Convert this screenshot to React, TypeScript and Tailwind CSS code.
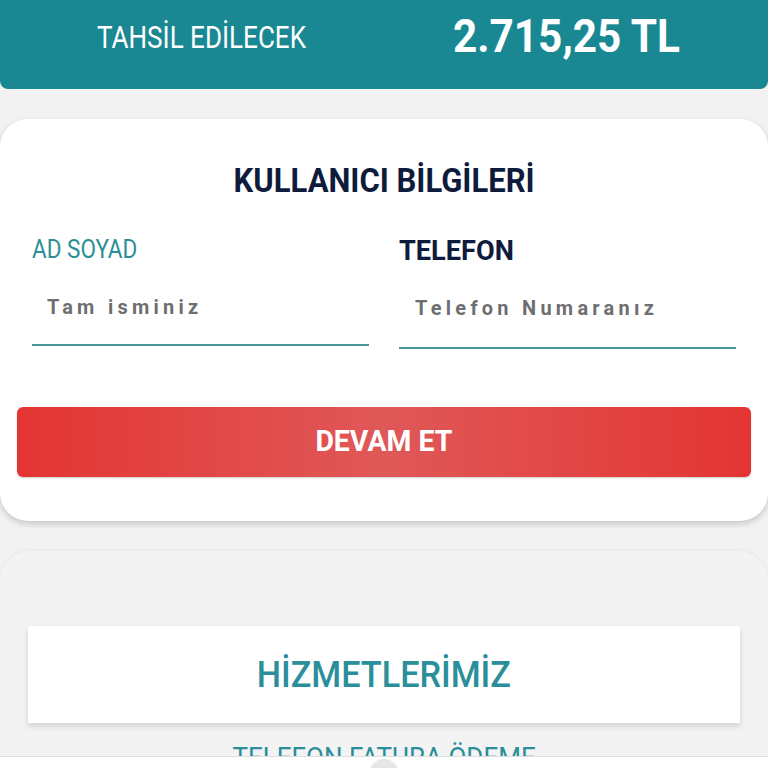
function C({ children, s = 'scale-x-[0.86]', o = 'origin-left' }: { children: React.ReactNode; s?: string; o?: string }) {
  return <span className={`inline-block ${s} ${o} whitespace-nowrap`}>{children}</span>;
}

export default function App() {
  const font = { fontFamily: 'Roboto, "Noto Sans", sans-serif' };
  return (
    <div className="w-[768px] h-[768px] overflow-hidden bg-[#f2f2f2] relative" style={font}>
      <div className="h-[89px] bg-[#198893] rounded-b-[8px] flex items-center text-white">
        <div className="w-[384px] pl-[97px] text-[31px] leading-none pb-[14px]"><C s="scale-x-[0.84]">TAHSİL EDİLECEK</C></div>
        <div className="pl-[69px] text-[46px] font-bold leading-none pb-[18px]"><C s="scale-x-[0.92]">2.715,25 TL</C></div>
      </div>
      <div className="mt-[30px] bg-white rounded-[28px] h-[402px] shadow-[0_3px_6px_rgba(0,0,0,0.18)] flex flex-col">
        <div className="pt-[45px] text-center text-[33px] font-bold text-[#0f1b3d] leading-none"><C s="scale-x-[0.94]" o="origin-center">KULLANICI BİLGİLERİ</C></div>
        <div className="flex px-[32px] gap-[30px] mt-[40px]">
          <div className="flex-1">
            <div className="text-[25px] text-[#2a8f96] leading-none"><C s="scale-x-[0.9]">AD SOYAD</C></div>
            <div className="mt-[35px] pl-[15px] text-[21px] font-bold tracking-[4.5px] text-[#6e6e70] leading-none"><C s="scale-x-[0.95]">Tam isminiz</C></div>
            <div className="mt-[26px] h-[2px] bg-[#4a9599]" />
          </div>
          <div className="flex-1">
            <div className="text-[28px] font-bold text-[#0f1b3d] leading-none"><C s="scale-x-[0.97]">TELEFON</C></div>
            <div className="mt-[33px] pl-[16px] text-[21px] font-bold tracking-[4.5px] text-[#6e6e70] leading-none"><C s="scale-x-[0.95]">Telefon Numaranız</C></div>
            <div className="mt-[28px] h-[2px] bg-[#4a9599]" />
          </div>
        </div>
        <div className="mx-[17px] mt-[58px] h-[70px] rounded-[6px] bg-[linear-gradient(90deg,#e33533_0%,#e05858_50%,#e33533_100%)] flex items-center justify-center text-white font-bold text-[29px] shadow-[0_1px_2px_rgba(0,0,0,0.2)]">
          <C s="scale-x-[0.98]" o="origin-center">DEVAM ET</C>
        </div>
      </div>
      <div className="mt-[30px] bg-[#f3f3f4] rounded-t-[30px] h-[300px] shadow-[0_-1px_4px_rgba(0,0,0,0.05)] pt-[75px]">
        <div className="mx-[28px] h-[97px] bg-white shadow-[0_3px_6px_rgba(0,0,0,0.15)] flex items-center justify-center text-[36px] text-[#2a8f9a] font-medium">
          <C s="scale-x-[0.95]" o="origin-center">HİZMETLERİMİZ</C>
        </div>
        <div className="mt-[21px] text-center text-[28px] text-[#2a8f9a] leading-none"><C s="scale-x-[0.93]" o="origin-center">TELEFON FATURA ÖDEME</C></div>
      </div>
      <div className="absolute left-0 right-0 bottom-0 h-[12px] bg-white border-t border-[#dddddd] flex justify-center">
        <div className="w-[30px] h-[30px] rounded-full bg-[#e6e6e6] mt-[2px]" />
      </div>
    </div>
  );
}
